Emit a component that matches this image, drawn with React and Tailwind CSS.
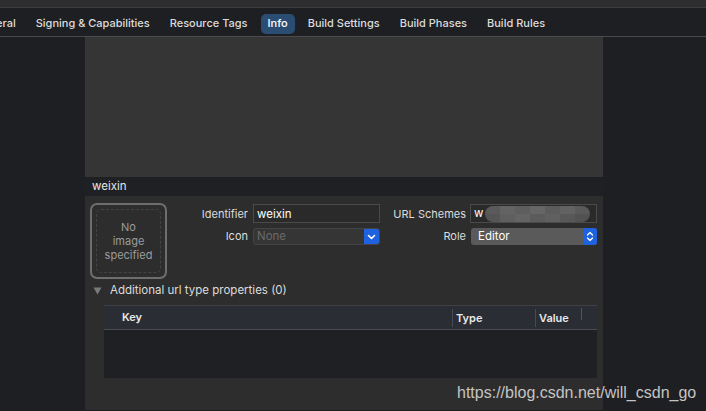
import React from 'react';

const tabs = ['eral', 'Signing & Capabilities', 'Resource Tags', 'Info', 'Build Settings', 'Build Phases', 'Build Rules'];

const font = { fontFamily: 'Inter, "Noto Sans", sans-serif' };

// mosaic used to hide the url scheme value
const mosaic = [
  ['#5a5a5a', '#636363', '#5e5e5e', '#666666', '#5c5c5c', '#626262', '#5a5a5a'],
  ['#555555', '#5f5f5f', '#646464', '#5b5b5b', '#606060', '#585858', '#525252'],
];

const Chevron = () => (
  <svg width="9" height="6" viewBox="0 0 9 6" fill="none">
    <path d="M1.5 1.5 L4.5 4.5 L7.5 1.5" stroke="white" strokeWidth="1.6" strokeLinecap="round" strokeLinejoin="round" />
  </svg>
);

const UpDown = () => (
  <svg width="8" height="11" viewBox="0 0 8 11" fill="none">
    <path d="M1.5 4 L4 1.5 L6.5 4 M1.5 7 L4 9.5 L6.5 7" stroke="white" strokeWidth="1.3" strokeLinecap="round" strokeLinejoin="round" />
  </svg>
);

const App = () => {
  return (
    <div className="relative w-[706px] h-[411px] overflow-hidden bg-[#1e1f22] text-[#dcdcdc]" style={font}>
      {/* window top strip */}
      <div className="h-[8px] bg-[#2e2e30] border-b border-[#3c3c3e]" />

      {/* Tab bar */}
      <div className="h-[29px] pt-[3px] flex items-center gap-[20px] border-b border-[#4a4a4c] text-[11px] font-medium">
        {tabs.map((t, i) => (
          <div
            key={t}
            className={
              t === 'Info'
                ? '-mx-[7px] px-[7px] h-[20px] flex items-center rounded-[5px] bg-[#2b4d73] text-white'
                : i === 0
                ? '-ml-[4px] text-[#dcdcdc]'
                : 'text-[#dcdcdc]'
            }
          >
            {t}
          </div>
        ))}
      </div>

      {/* Body */}
      <div className="flex h-[373px]">
        <div className="w-[85px] bg-[#1e1f22]" />

        <div className="w-[518px] flex flex-col">
          <div className="h-[140px] bg-[#353535]" />
          <div className="h-[19px] bg-[#1f2023] flex items-center pl-[7px] text-[11.5px] text-[#e6e6e6]">weixin</div>

          <div className="flex-1 bg-[#2d2d2d] pt-[7px]">
            <div className="flex">
              {/* image well */}
              <div className="ml-[5px] w-[77px] h-[76px] rounded-[7px] border-2 border-[#6e6e6e] p-[4px]">
                <div className="w-full h-full rounded-[5px] border border-dashed border-[#444] flex items-center justify-center text-center text-[11px] leading-[14px] text-[#9b9b9b]">
                  No<br />image<br />specified
                </div>
              </div>

              {/* fields */}
              <div className="ml-[7px] mt-[1px] grid grid-cols-[74px_127px_81px_126px] gap-x-[5px] gap-y-[5px] text-[11px] content-start">
                <div className="text-right h-[19px] leading-[20px]">Identifier</div>
                <div className="h-[19px] bg-[#2a2a2a] border border-[#4a4a4a] px-[3px] leading-[18px] text-[11.5px] text-white">weixin</div>
                <div className="text-right h-[19px] leading-[20px]">URL Schemes</div>
                <div className="-ml-[1px] h-[19px] bg-[#2a2a2a] border border-[#4a4a4a] pl-[3px] flex items-center text-[11.5px] text-white">
                  <span>w</span>
                  <div className="ml-[2px] flex flex-col rounded-[8px] overflow-hidden">
                    {mosaic.map((row, r) => (
                      <div key={r} className="flex">
                        {row.map((c, j) => (
                          <div key={j} className="w-[15px] h-[8px]" style={{ background: c }} />
                        ))}
                      </div>
                    ))}
                  </div>
                </div>

                <div className="text-right h-[17px] leading-[17px]">Icon</div>
                <div className="h-[17px] flex rounded-[3px] overflow-hidden bg-[#353535] border border-[#444]">
                  <div className="flex-1 px-[3px] leading-[15px] text-[11.5px] text-[#6a6a6a]">None</div>
                  <div className="w-[15px] bg-[#1f62e0] flex items-center justify-center">
                    <Chevron />
                  </div>
                </div>
                <div className="text-right h-[17px] leading-[17px]">Role</div>
                <div className="h-[17px] flex rounded-[3px] overflow-hidden bg-[#5a5a5a]">
                  <div className="flex-1 px-[7px] leading-[17px] text-[11.5px] text-white">Editor</div>
                  <div className="w-[14px] bg-[#1f62e0] flex items-center justify-center">
                    <UpDown />
                  </div>
                </div>
              </div>
            </div>

            {/* disclosure */}
            <div className="mt-[4px] flex items-center h-[16px] text-[11.5px]">
              <svg className="ml-[8px]" width="9" height="8" viewBox="0 0 9 8">
                <path d="M0.5 0.5 H8.5 L4.5 7.5 Z" fill="#7a7a7a" />
              </svg>
              <span className="ml-[8px]">Additional url type properties (0)</span>
            </div>

            {/* table */}
            <div className="mt-[6px] ml-[19px] w-[493px] h-[73px] flex flex-col">
              <div className="h-[25px] bg-[#2a2d33] border-t border-[#3e4046] border-b border-b-[#4a4c52] flex items-center text-[11px] font-semibold text-[#e8e8e8]">
                <div className="w-[348px] pl-[18px]">Key</div>
                <div className="w-[83px] h-[18px] border-l border-[#474a50] pl-[3px] leading-[18px]">Type</div>
                <div className="w-[46px] h-[18px] border-l border-[#474a50] pl-[3px] leading-[18px]">Value</div>
                <div className="h-[12px] border-l border-[#555] self-start mt-[2px]" />
              </div>
              <div className="flex-1 bg-[#1f2023]" />
            </div>
          </div>
        </div>

        <div className="flex-1 bg-[#1e1f22]" />
      </div>

      {/* watermark */}
      <div
        className="absolute left-[457px] top-[381px] text-[16px] text-[#c4c4c4]"
        style={{ fontFamily: '"Liberation Sans", Arial, sans-serif' }}
      >
        https://blog.csdn.net/will_csdn_go
      </div>
    </div>
  );
};

export default App;
